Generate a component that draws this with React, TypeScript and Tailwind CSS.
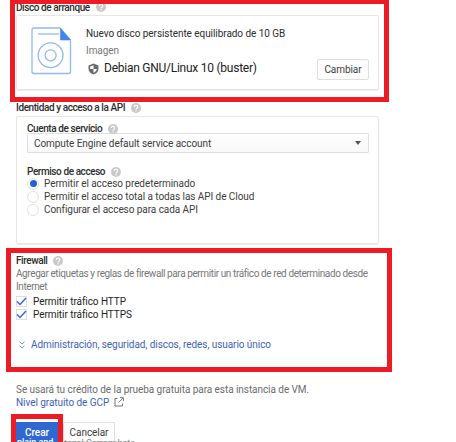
import React from "react";

function Help() {
  return (
    <svg className="h-[10px] w-[10px] shrink-0" viewBox="0 0 10 10">
      <circle cx="5" cy="5" r="5" fill="#c9c9c9" />
      <path d="M3.3 4A1.7 1.6 0 1 1 5.9 5.2Q5 5.700 5 6.500M5 7.300V8.400" fill="none" stroke="#fff" strokeWidth="1.1" />
    </svg>
  );
}

function DiskIcon() {
  return (
    <svg className="h-[48px] w-[41px] shrink-0" viewBox="0 0 41 48" fill="none" stroke="#93b6f4" strokeWidth="1.3">
      <path d="M29.500 1H3Q1 1 1 3V44.500Q1 46.500 3 46.500H37.500Q39.500 46.500 39.500 44.500V13.500" />
      <path d="M7 7H28" />
      <circle cx="19.600" cy="28.300" r="12.400" />
      <circle cx="19.600" cy="28.300" r="5.500" />
      <path d="M29.500 1V13H39.700Z" fill="#4283f0" stroke="#4283f0" strokeWidth="0.6" />
    </svg>
  );
}

function Shield() {
  return (
    <svg className="h-[12px] w-[11px] shrink-0" viewBox="0 0 11 12">
      <path d="M5.500 .5L10.500 2.500V5.500Q10.500 9.800 5.500 11.500Q.5 9.800 .5 5.500V2.500Z" fill="#6b6b6b" />
      <path d="M5.500 2.300V6H2.200V3.500ZM5.500 6H8.900Q8.500 8.600 5.500 9.900Z" fill="#fff" />
    </svg>
  );
}

function Radio({ on = false }: { on?: boolean }) {
  return (
    <span className="flex h-[12px] w-[12px] shrink-0 items-center justify-center rounded-full border border-[#e2e2e2] bg-white">
      {on && <span className="h-[7px] w-[7px] shrink-0 rounded-full bg-[#2360d3]" />}
    </span>
  );
}

function Check() {
  return (
    <span className="flex h-[11px] w-[11px] shrink-0 items-center justify-center border border-[#dfdfdf]">
      <svg className="h-[9px] w-[11px] shrink-0" viewBox="0 0 11 9">
        <path d="M1 4.500L4 7.500L10 1" fill="none" stroke="#3c68cf" strokeWidth="1.5" />
      </svg>
    </span>
  );
}

const card = "w-[363px] rounded-[2px] border border-[#e6e6e6] shadow-[0_1px_1px_#eeeeee]";
const title = "flex items-center h-[13px] text-[10px] font-medium tracking-[-0.42px] text-[#2c2c2c]";

export default function App() {
  return (
    <main className="relative h-[442px] w-[456px] overflow-hidden whitespace-nowrap bg-white pl-4 font-['Roboto',sans-serif] text-[10px] leading-[13px] tracking-[-0.06px] text-[#3c3c3c]">
      <h2 className={`${title} gap-[6px] pt-[1px]`}>
        <span>Disco de arranque</span>
        <Help />
      </h2>
      <section className={`${card} mt-[2px] flex h-[75px] pl-[14px] pt-[11px]`}>
        <DiskIcon />
        <div className="ml-[14px] flex w-[231px] flex-col">
          <span className="h-[13px] text-[#2c2c2c]">Nuevo disco persistente equilibrado de 10 GB</span>
          <span className="mt-1 h-[13px] text-[#777]">Imagen</span>
          <span className="mt-[5px] flex items-center gap-[5px] pl-[2px] text-[12px] text-[#222]">
            <Shield />
            <span className="tracking-[-0.25px]">Debian GNU/Linux 10 (buster)</span>
          </span>
        </div>
        <button className="mt-[32px] h-[21px] w-[52px] rounded-[2px] border border-[#dedede] bg-[#fcfcfc] leading-[13px]">Cambiar</button>
      </section>

      <h2 className={`${title} mt-[11px] gap-[6px]`}>
        <span>Identidad y acceso a la API</span>
        <Help />
      </h2>
      <section className={`${card} mt-[2px] h-[128px] pl-[10px] pt-[5px]`}>
        <h3 className={`${title} gap-[6px]`}>
          <span>Cuenta de servicio</span>
          <Help />
        </h3>
        <div className="mt-[-2px] flex h-[20px] w-[342px] items-center justify-between rounded-[1px] border border-[#dedede] bg-gradient-to-b from-white to-[#f8f8f8] pl-[6px] pr-[7px]">
          <span>Compute Engine default service account</span>
          <span className="border-x-[3px] border-t-[4px] border-x-transparent border-t-[#555]" />
        </div>
        <h3 className={`${title} mt-[12px] gap-[6px]`}>
          <span>Permiso de acceso</span>
          <Help />
        </h3>
        <div className="mt-[-1px]">
          <div className="flex h-[13px] items-center gap-[5px]"><Radio on /><span>Permitir el acceso predeterminado</span></div>
          <div className="flex h-[13px] items-center gap-[5px]"><Radio /><span>Permitir el acceso total a todas las API de Cloud</span></div>
          <div className="flex h-[13px] items-center gap-[5px]"><Radio /><span>Configurar el acceso para cada API</span></div>
        </div>
      </section>

      <section className="mt-[10px]">
        <h2 className={`${title} gap-[6px]`}><span>Firewall</span><Help /></h2>
        <p className="text-[10px] tracking-[-0.4px] text-[#777]">
          Agregar etiquetas y reglas de firewall para permitir un tráfico de red determinado desde<br />Internet
        </p>
        <div className="mt-[2px] text-[#222]">
          <div className="flex h-[13px] items-center gap-[6px]"><Check /><span>Permitir tráfico HTTP</span></div>
          <div className="flex h-[13px] items-center gap-[6px]"><Check /><span>Permitir tráfico HTTPS</span></div>
        </div>
        <a className="mt-[17px] flex h-[13px] items-center gap-[6px] pl-[3px] text-[#3e62b7]">
          <svg className="h-[8px] w-[6px] shrink-0" viewBox="0 0 6 8" fill="none" stroke="#7792d0" strokeWidth="1"><path d="M.5 .7L3 3L5.500 .7M.5 4.700L3 7L5.500 4.700" /></svg>
          <span>Administración, seguridad, discos, redes, usuario único</span>
        </a>
      </section>

      <p className="mt-[32px] h-[13px] text-[#6b6b6b]">Se usará tu crédito de la prueba gratuita para esta instancia de VM.</p>
      <a className="flex h-[13px] items-center gap-[5px] text-[#3e62b7]">
        <span>Nivel gratuito de GCP</span>
        <svg className="mb-[2px] h-[10px] w-[10px] shrink-0" viewBox="0 0 10 10" fill="none" stroke="#777" strokeWidth="1"><path d="M3.500 1.500H1V9H8.500V6.500M6 .7H9.400V4M9.200 .9L4.500 5.600" /></svg>
      </a>
      <div className="mt-[13px] flex items-start gap-[5px]">
        <button className="h-[24px] w-[42px] bg-[#3068d2] pb-[4px] font-medium leading-[13px] text-white">Crear</button>
        <button className="h-[20px] w-[52px] rounded-[1px] border border-[#e0e0e0] bg-white leading-[13px]">Cancelar</button>
      </div>

      <span className="absolute left-[17px] top-[438px] text-[9px] font-medium leading-[9px] text-white">plain and</span>
      <span className="absolute left-[64px] top-[439px] text-[9px] leading-[9px] text-[#8a8a8a]">tonal Corregphota</span>
      <div className="absolute left-[10px] top-[-1px] h-[103px] w-[379px] border-[5px] border-[#ed1c24]" />
      <div className="absolute left-[6px] top-[248px] h-[124px] w-[386px] border-[5px] border-[#ed1c24]" />
      <div className="absolute left-[11px] top-[414px] h-[40px] w-[52px] border-[5px] border-[#ed1c24]" />
    </main>
  );
}
